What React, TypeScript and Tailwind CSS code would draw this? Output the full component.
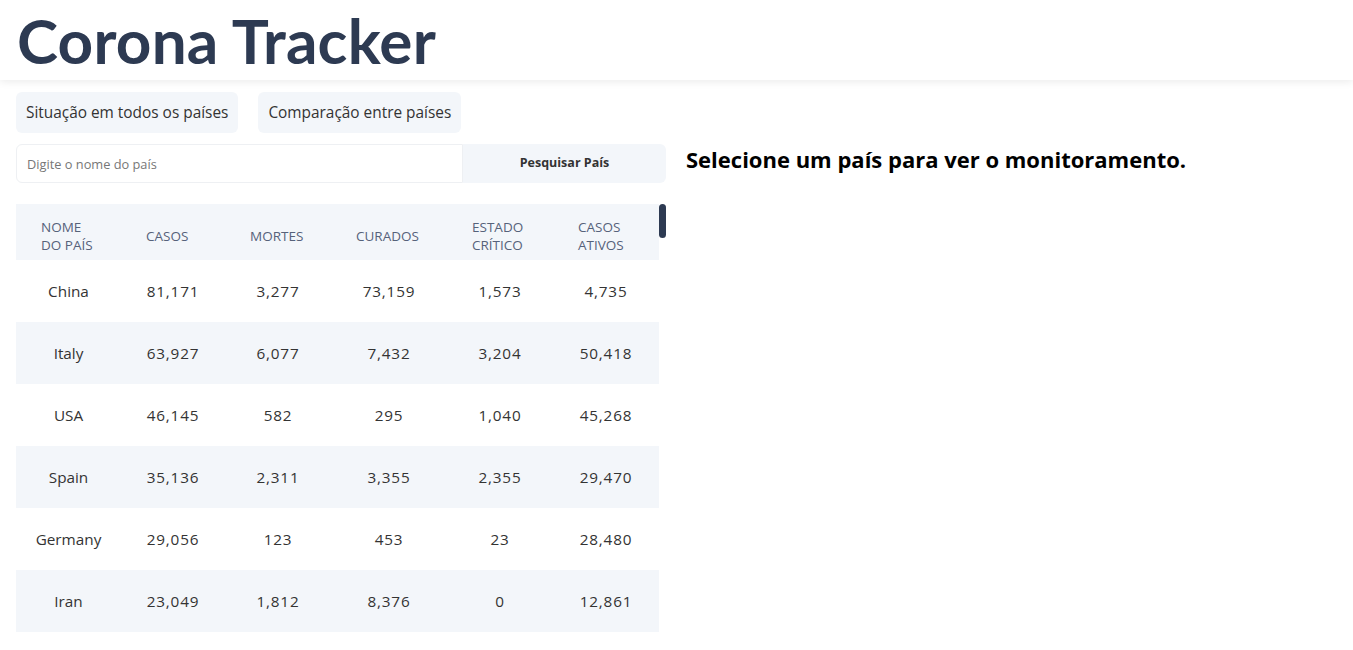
import React from 'react';

const rows = [
  ['China', '81,171', '3,277', '73,159', '1,573', '4,735'],
  ['Italy', '63,927', '6,077', '7,432', '3,204', '50,418'],
  ['USA', '46,145', '582', '295', '1,040', '45,268'],
  ['Spain', '35,136', '2,311', '3,355', '2,355', '29,470'],
  ['Germany', '29,056', '123', '453', '23', '28,480'],
  ['Iran', '23,049', '1,812', '8,376', '0', '12,861'],
];

const headers = [
  ['NOME', 'DO PAÍS'],
  ['CASOS'],
  ['MORTES'],
  ['CURADOS'],
  ['ESTADO', 'CRÍTICO'],
  ['CASOS', 'ATIVOS'],
];

const widths = ['w-[105px]', 'w-[104px]', 'w-[106px]', 'w-[116px]', 'w-[106px]', 'w-[106px]'];

export default function App() {
  return (
    <div className="min-h-screen bg-white font-['Open_Sans',sans-serif] text-[#333]">
      <header className="h-[80px] flex items-center px-[17px] bg-white shadow-[0_2px_8px_rgba(0,0,0,0.08)]">
        <h1 className="font-['Lato',sans-serif] text-[62px] font-bold text-[#2d3a52] tracking-[0.2px] leading-none">Corona Tracker</h1>
      </header>

      <div className="flex px-4 gap-5">
        {/* Left column */}
        <div className="w-[650px] shrink-0">
          <div className="flex gap-5 mt-3">
            <button className="h-[41px] px-[10px] rounded-md bg-[#f3f6fa] text-[15.4px] text-[#333]">
              Situação em todos os países
            </button>
            <button className="h-[41px] px-[10px] rounded-md bg-[#f3f6fa] text-[15.4px] text-[#333]">
              Comparação entre países
            </button>
          </div>

          <div className="flex mt-[11px] h-[39px]">
            <input
              type="text"
              placeholder="Digite o nome do país"
              className="w-[447px] h-full border border-[#eef0f3] rounded-l-md px-[10px] text-[12.8px] placeholder:text-[#777] outline-none"
            />
            <button className="flex-1 h-full bg-[#f3f6fa] rounded-r-md text-[12.5px] font-bold text-[#333]">
              Pesquisar País
            </button>
          </div>

          {/* Table */}
          <div className="flex mt-[21px]">
            <table className="w-[643px] table-fixed border-collapse">
              <colgroup>
                {widths.map((w, i) => (
                  <col key={i} className={w} />
                ))}
              </colgroup>
              <thead>
                <tr className="bg-[#f3f6fa] h-[56px]">
                  {headers.map((h, i) => (
                    <th key={i} className="text-left pl-[25px] pt-[8px] text-[13.5px] font-medium text-[#56627a] leading-[18px]">
                      {h.map((l, j) => (
                        <div key={j}>{l}</div>
                      ))}
                    </th>
                  ))}
                </tr>
              </thead>
              <tbody>
                {rows.map((r, i) => (
                  <tr key={i} className={`h-[62px] ${i % 2 === 1 ? 'bg-[#f3f6fa]' : 'bg-white'}`}>
                    {r.map((c, j) => (
                      <td
                        key={j}
                        className={`text-center text-[15.3px] text-[#333] ${j === 0 ? '' : 'tracking-[0.8px]'}`}
                      >
                        {c}
                      </td>
                    ))}
                  </tr>
                ))}
              </tbody>
            </table>
            <div className="w-[7px]">
              <div className="h-[34px] rounded-full bg-[#2d3a52]" />
            </div>
          </div>
        </div>

        {/* Right column */}
        <div className="flex-1 pt-[64px]">
          <h2 className="text-[22px] font-bold text-black leading-[30px]">Selecione um país para ver o monitoramento.</h2>
        </div>
      </div>
    </div>
  );
}
